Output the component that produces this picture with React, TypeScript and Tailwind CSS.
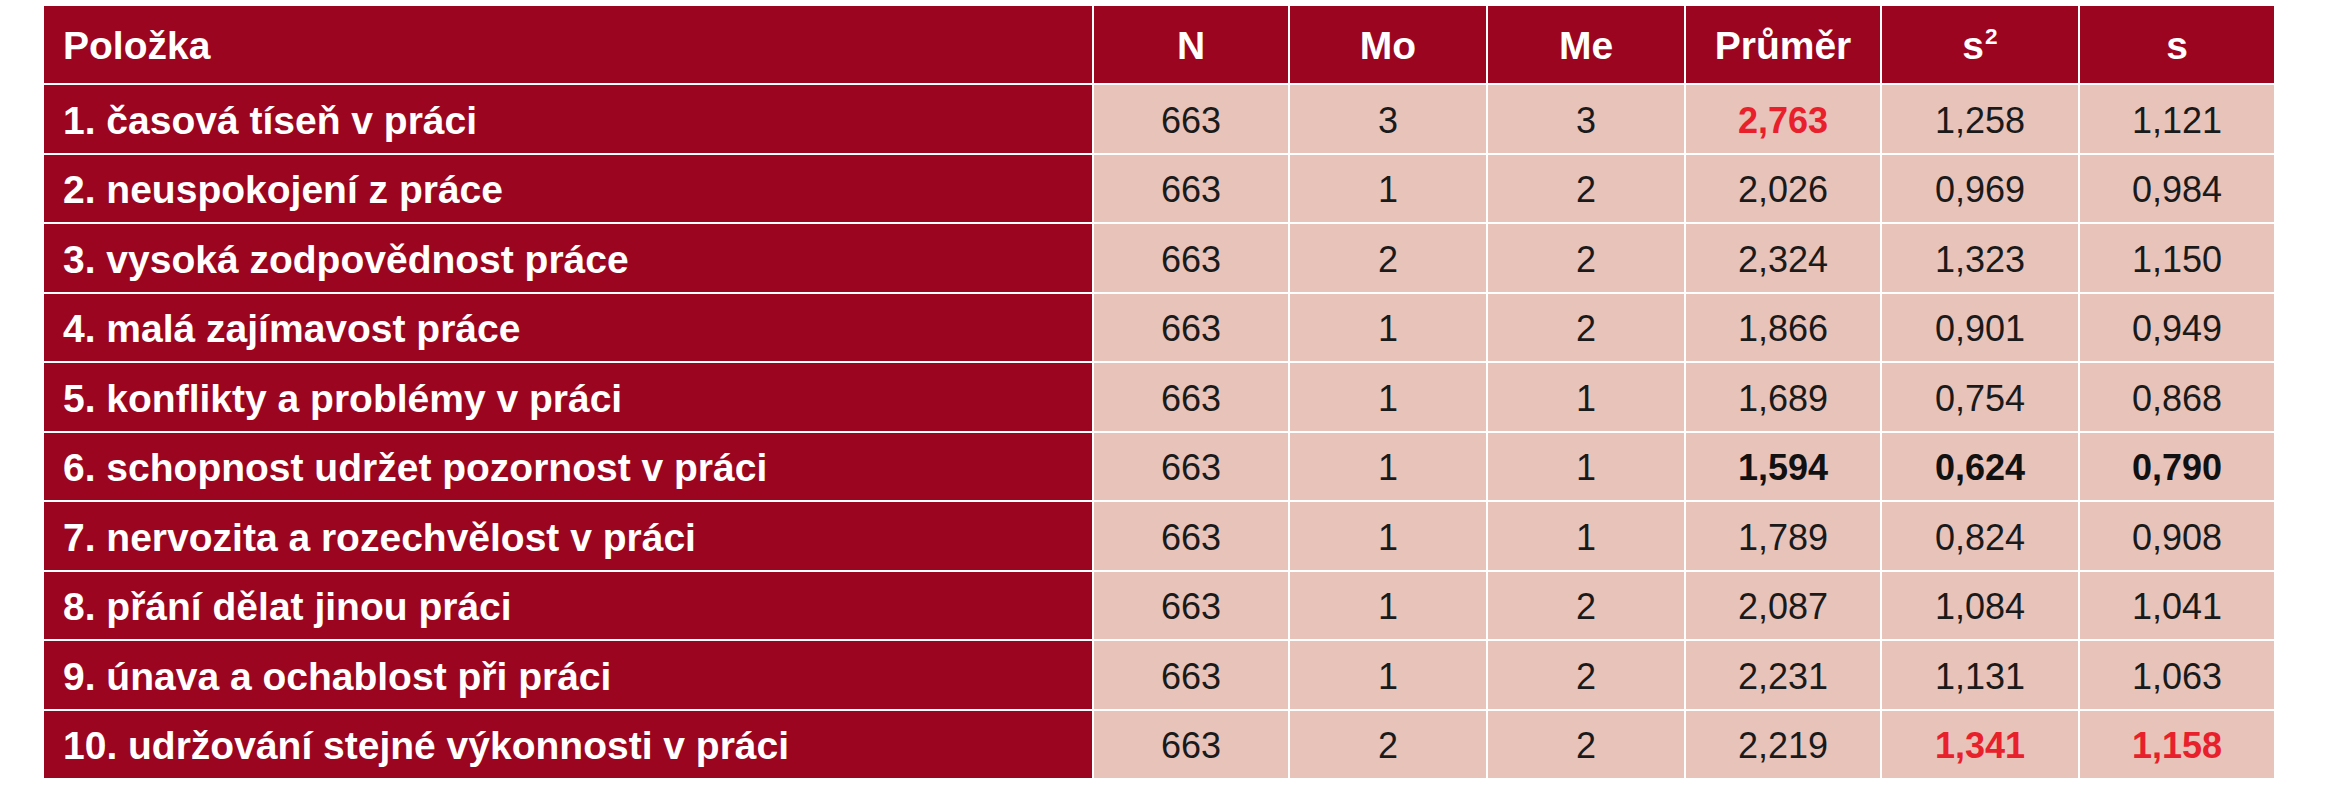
import React from 'react'

type Cell = { v: string; tone?: 'bold' | 'red' }

const rows: { label: string; cells: Cell[] }[] = [
  { label: '1. časová tíseň v práci', cells: [{ v: '663' }, { v: '3' }, { v: '3' }, { v: '2,763', tone: 'red' }, { v: '1,258' }, { v: '1,121' }] },
  { label: '2. neuspokojení z práce', cells: [{ v: '663' }, { v: '1' }, { v: '2' }, { v: '2,026' }, { v: '0,969' }, { v: '0,984' }] },
  { label: '3. vysoká zodpovědnost práce', cells: [{ v: '663' }, { v: '2' }, { v: '2' }, { v: '2,324' }, { v: '1,323' }, { v: '1,150' }] },
  { label: '4. malá zajímavost práce', cells: [{ v: '663' }, { v: '1' }, { v: '2' }, { v: '1,866' }, { v: '0,901' }, { v: '0,949' }] },
  { label: '5. konflikty a problémy v práci', cells: [{ v: '663' }, { v: '1' }, { v: '1' }, { v: '1,689' }, { v: '0,754' }, { v: '0,868' }] },
  { label: '6. schopnost udržet pozornost v práci', cells: [{ v: '663' }, { v: '1' }, { v: '1' }, { v: '1,594', tone: 'bold' }, { v: '0,624', tone: 'bold' }, { v: '0,790', tone: 'bold' }] },
  { label: '7. nervozita a rozechvělost v práci', cells: [{ v: '663' }, { v: '1' }, { v: '1' }, { v: '1,789' }, { v: '0,824' }, { v: '0,908' }] },
  { label: '8. přání dělat jinou práci', cells: [{ v: '663' }, { v: '1' }, { v: '2' }, { v: '2,087' }, { v: '1,084' }, { v: '1,041' }] },
  { label: '9. únava a ochablost při práci', cells: [{ v: '663' }, { v: '1' }, { v: '2' }, { v: '2,231' }, { v: '1,131' }, { v: '1,063' }] },
  { label: '10. udržování stejné výkonnosti v práci', cells: [{ v: '663' }, { v: '2' }, { v: '2' }, { v: '2,219' }, { v: '1,341', tone: 'red' }, { v: '1,158', tone: 'red' }] },
]

const labelFont = "font-['Liberation_Sans_Narrow','Liberation_Sans',sans-serif] font-bold"
const numFont = "font-['Liberation_Sans',sans-serif]"

export default function App() {
  return (
    <div className="min-h-[800px] w-[2343px] bg-white pl-[44px] pt-[6px]">
      <div className="grid w-fit grid-cols-[1048px_194px_196px_196px_194px_196px_194px] grid-rows-[77px_repeat(10,67.5px)] gap-[2px] bg-white">
        {/* header */}
        <div className={`flex items-center bg-[#9c0520] pl-[19px] pt-[3px] text-[39px] text-white ${labelFont}`}>
          Položka
        </div>
        {['N', 'Mo', 'Me', 'Průměr'].map((h) => (
          <div key={h} className={`flex items-center justify-center bg-[#9c0520] pt-[3px] text-[39px] text-white ${labelFont}`}>
            {h}
          </div>
        ))}
        <div className={`flex items-center justify-center bg-[#9c0520] pt-[3px] text-[39px] text-white ${labelFont}`}>
          s<sup className="top-[-0.4em] ml-[1px] text-[0.58em]">2</sup>
        </div>
        <div className={`flex items-center justify-center bg-[#9c0520] pt-[3px] text-[39px] text-white ${labelFont}`}>
          s
        </div>

        {rows.map((r) => (
          <React.Fragment key={r.label}>
            <div className={`flex items-center bg-[#9c0520] pl-[19px] pt-[4px] text-[39px] text-white ${labelFont}`}>
              {r.label}
            </div>
            {r.cells.map((c, i) => (
              <div
                key={i}
                className={`flex items-center justify-center bg-[#e8c3ba] pt-[4px] text-[36px] ${
                  c.tone === 'red'
                    ? 'font-bold text-[#e8202c]'
                    : c.tone === 'bold'
                      ? 'font-bold text-[#111111]'
                      : 'text-[#1a1a1a]'
                } ${numFont}`}
              >
                {c.v}
              </div>
            ))}
          </React.Fragment>
        ))}
      </div>
    </div>
  )
}
